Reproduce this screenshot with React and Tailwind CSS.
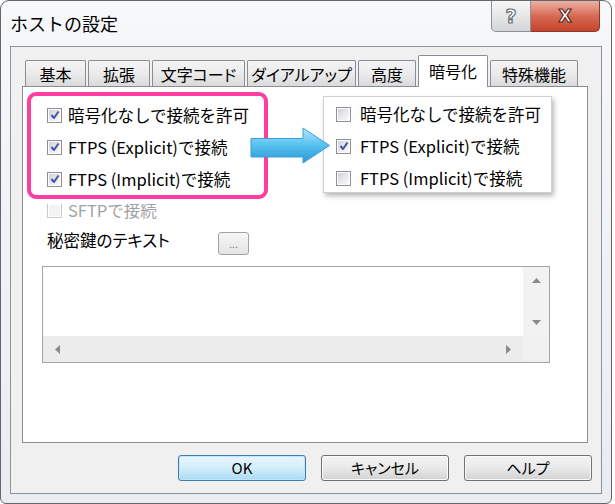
import React from 'react';

const tabs = [
  { label: "基本", w: "w-[61px]" },
  { label: "拡張", w: "w-[62px]" },
  { label: "文字コード", w: "w-[93px]" },
  { label: "ダイアルアップ", w: "w-[109px]" },
  { label: "高度", w: "w-[58px]" },
  { label: "暗号化", w: "w-[70px]", active: true },
  { label: "特殊機能", w: "w-[88px]" },
];

const CheckBox = ({ checked, disabled }) => (
  <span
    className={`w-[15px] h-[15px] shrink-0 border p-[1px] bg-white flex ${
      disabled ? "border-[#c9c9c9]" : "border-[#8e8f8f]"
    }`}
  >
    <span
      className={`flex-1 flex items-center justify-center ${
        disabled
          ? "bg-[#f4f4f4]"
          : "bg-gradient-to-br from-[#cdd1d8] via-[#e6e8ec] to-[#fbfbfb]"
      }`}
    >
      {checked && (
        <svg width="10" height="10" viewBox="0 0 10 10">
          <path d="M1.5 5 L4 8 L8.5 1.5" fill="none" stroke="#4754a6" strokeWidth="2" strokeLinejoin="round" />
        </svg>
      )}
    </span>
  </span>
);

const Row = ({ label, checked, gap = "gap-[6px]" }) => (
  <div className={`h-[32px] flex items-center ${gap}`}>
    <CheckBox checked={checked} />
    <span className="text-[16.5px] text-black leading-none">{label}</span>
  </div>
);

const Button = ({ label, primary }) => (
  <div
    className={`w-[128px] h-[26px] rounded-[3px] border flex items-center justify-center text-[15px] [font-feature-settings:'palt'] text-black ${
      primary
        ? "border-[#3c7fb1] bg-gradient-to-b from-[#eaf6fd] via-[#d4eefb] to-[#a9daf5] shadow-[inset_0_0_0_1px_#bfe6f9]"
        : "border-[#707070] bg-gradient-to-b from-[#f4f4f4] via-[#e9e9e9] to-[#d2d2d2] shadow-[inset_0_0_0_1px_#fbfbfb]"
    }`}
  >
    {label}
  </div>
);

export default function App() {
  return (
    <div className="w-[615px] h-[504px] bg-white overflow-hidden font-['Noto_Sans_CJK_JP',sans-serif]">
      <div className="w-[612px] h-[504px] flex flex-col border border-[#62666c] rounded-t-[9px] rounded-b-[6px] bg-gradient-to-b from-[#f6f8fa] to-[#e9edf1]">
        {/* Title bar */}
        <div className="h-[45px] flex items-start">
          <span className="pl-[9px] pt-[8px] text-[18px] text-black leading-[28px]">ホストの設定</span>
          <div className="ml-auto mr-[11px] flex">
            <div className="w-[40px] h-[31px] rounded-bl-[5px] border border-t-0 border-[#8d9096] bg-gradient-to-b from-[#f7f7f7] via-[#e6e6e6] to-[#d3d6da] flex items-center justify-center">
              <span className="text-[19px] font-bold text-white leading-none font-['DejaVu_Sans',sans-serif] [-webkit-text-stroke:1.2px_#6a6e74]">?</span>
            </div>
            <div className="w-[69px] h-[31px] rounded-br-[5px] border border-l-0 border-t-0 border-[#8e3a2b] bg-gradient-to-b from-[#eab1a4] via-[#d66a54] to-[#c5432b] flex items-center justify-center">
              <span className="text-[17px] font-bold text-white leading-none font-['DejaVu_Sans',sans-serif] [-webkit-text-stroke:1.2px_#5a2a22]">X</span>
            </div>
          </div>
        </div>

        {/* Client area */}
        <div className="ml-[9px] mr-[9px] h-[448px] border border-[#8e9399] bg-[#f0f0f0] pt-[8px]">
          <div className="pl-[11px] pr-[13px]">
            {/* Tabs */}
            <div className="h-[31px] flex items-end gap-[2px] pl-[3px] relative z-10">
              {tabs.map((t) =>
                t.active ? (
                  <div
                    key={t.label}
                    className={`${t.w} h-[32px] -mb-[1px] bg-white border border-b-0 border-[#898c95] rounded-t-[2px] flex items-center justify-center text-[16px] text-black pb-[2px] [font-feature-settings:'palt']`}
                  >
                    {t.label}
                  </div>
                ) : (
                  <div
                    key={t.label}
                    className={`${t.w} h-[26px] bg-gradient-to-b from-[#f4f4f4] via-[#ebebeb] to-[#dadada] border border-b-0 border-[#898c95] rounded-t-[2px] flex items-center justify-center text-[16px] text-black [font-feature-settings:'palt']`}
                  >
                    {t.label}
                  </div>
                )
              )}
            </div>

            {/* Panel */}
            <div className="relative h-[357px] bg-white border border-[#898c95] pt-[5px]">
              <div className="relative z-10 ml-[4px] w-[241px] rounded-[9px] border-[4px] border-[#ff3ea2] bg-white pt-[3px] pl-[16px] shadow-[0_5px_0_0_#ffffff]">
                <Row label="暗号化なしで接続を許可" checked />
                <Row label="FTPS (Explicit)で接続" checked />
                <Row label="FTPS (Implicit)で接続" checked />
              </div>

              <div className="h-[32px] -mt-[5px] pl-[24px] flex items-center gap-[6px]">
                <CheckBox disabled />
                <span className="text-[16.5px] text-[#a3a3a3] leading-none">SFTPで接続</span>
              </div>

              <div className="h-[28px] pl-[24px] flex items-center">
                <span className="w-[171px] text-[16.5px] text-black leading-none [font-feature-settings:'palt']">秘密鍵のテキスト</span>
                <div className="self-start mt-[6px] w-[31px] h-[23px] rounded-[3px] border border-[#a2a2a2] bg-gradient-to-b from-[#f7f7f7] to-[#e4e4e4] flex items-end justify-center pb-[5px]">
                  <span className="text-[10px] leading-none text-[#777]">...</span>
                </div>
              </div>

              {/* Text box with scrollbars */}
              <div className="mt-[12px] ml-[19px] w-[508px] h-[97px] border border-[#a3a3a3] grid grid-cols-[1fr_26px] grid-rows-[1fr_26px]">
                <div className="bg-white" />
                <div className="bg-[#f2f2f2] flex flex-col items-center justify-between py-[11px]">
                  <svg width="9" height="5" viewBox="0 0 9 5"><path d="M0 5 L4.5 0 L9 5 Z" fill="#8a8a8a" /></svg>
                  <svg width="9" height="5" viewBox="0 0 9 5"><path d="M0 0 L4.5 5 L9 0 Z" fill="#8a8a8a" /></svg>
                </div>
                <div className="bg-[#ececec] flex items-center justify-between px-[12px]">
                  <svg width="5" height="9" viewBox="0 0 5 9"><path d="M5 0 L0 4.5 L5 9 Z" fill="#8a8a8a" /></svg>
                  <svg width="5" height="9" viewBox="0 0 5 9"><path d="M0 0 L5 4.5 L0 9 Z" fill="#8a8a8a" /></svg>
                </div>
                <div className="bg-[#f0f0f0]" />
              </div>

              {/* Callout: result after change */}
              <div className="absolute left-[300px] top-[9px] w-[229px] h-[97px] bg-white border border-[#cfcfcf] shadow-[2px_3px_5px_rgba(0,0,0,0.28)] pt-[1px] pl-[12px] z-10">
                <Row label="暗号化なしで接続を許可" gap="gap-[9px]" />
                <Row label="FTPS (Explicit)で接続" checked gap="gap-[9px]" />
                <Row label="FTPS (Implicit)で接続" gap="gap-[9px]" />
              </div>

              {/* Arrow */}
              <svg className="absolute left-[227px] top-[40px] z-20" width="81" height="37" viewBox="0 0 81 37">
                <defs>
                  <linearGradient id="arw" x1="0" y1="0" x2="0" y2="1">
                    <stop offset="0" stopColor="#b4e6fc" />
                    <stop offset="0.45" stopColor="#5cc4f2" />
                    <stop offset="1" stopColor="#2a98d6" />
                  </linearGradient>
                </defs>
                <path
                  d="M1 11.5 L53 11.5 L53 1 L79.5 18.5 L53 36 L53 30 L1 30 Z"
                  fill="url(#arw)"
                  stroke="#3a9fd8"
                  strokeWidth="1"
                  strokeLinejoin="round"
                />
              </svg>
            </div>
          </div>

          {/* Dialog buttons */}
          <div className="mt-[12px] pr-[9px] flex justify-end gap-[15px]">
            <Button label="OK" primary />
            <Button label="キャンセル" />
            <Button label="ヘルプ" />
          </div>
        </div>
      </div>
    </div>
  );
}
